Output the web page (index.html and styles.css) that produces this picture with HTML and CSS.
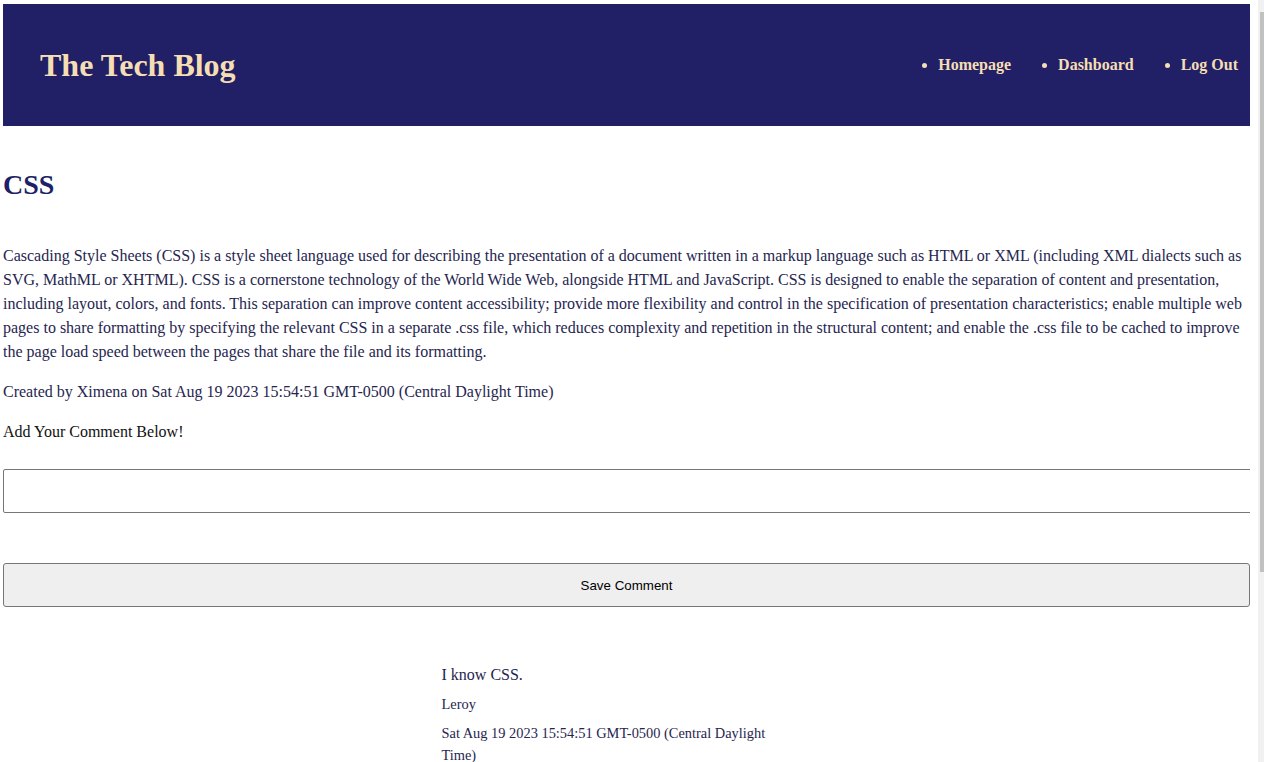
FILE: index.html
```html
<!DOCTYPE html>
<html lang="en">
<head>
<meta charset="utf-8">
<title>The Tech Blog</title>
<link rel="stylesheet" href="styles.css">
</head>
<body>
<header class="site-header">
  <h1 class="site-title">The Tech Blog</h1>
  <nav>
    <ul class="nav-list">
      <li class="nav-item">Homepage</li>
      <li class="nav-item">Dashboard</li>
      <li class="nav-item">Log Out</li>
    </ul>
  </nav>
</header>
<main>
  <h2 class="post-title">CSS</h2>
  <p class="post-body">Cascading Style Sheets (CSS) is a style sheet language used for describing the presentation of a document written in a markup language such as HTML or XML (including XML dialects such as SVG, MathML or XHTML). CSS is a cornerstone technology of the World Wide Web, alongside HTML and JavaScript. CSS is designed to enable the separation of content and presentation, including layout, colors, and fonts. This separation can improve content accessibility; provide more flexibility and control in the specification of presentation characteristics; enable multiple web pages to share formatting by specifying the relevant CSS in a separate .css file, which reduces complexity and repetition in the structural content; and enable the .css file to be cached to improve the page load speed between the pages that share the file and its formatting.</p>
  <p class="post-meta">Created by Ximena on Sat Aug 19 2023 15:54:51 GMT-0500 (Central Daylight Time)</p>
  <form class="comment-form">
    <p class="comment-label">Add Your Comment Below!</p>
    <input class="comment-input" type="text">
    <button class="comment-button" type="button">Save Comment</button>
  </form>
  <section class="comments">
    <div class="comment">
      <p class="comment-text">I know CSS.</p>
      <p class="comment-author">Leroy</p>
      <p class="comment-date">Sat Aug 19 2023 15:54:51 GMT-0500 (Central Daylight Time)</p>
    </div>
  </section>
</main>
<div class="scroll-track"><div class="scroll-thumb"></div></div>
</body>
</html>
```
FILE: styles.css
```css
::-webkit-scrollbar {
  width: 0;
}

body {
  margin: 4px 14px 0 3px;
  font-family: "Liberation Serif", "Times New Roman", serif;
  color: #26254f;
  background: #fff;
}

.scroll-track {
  position: fixed;
  top: 0;
  right: 0;
  width: 6px;
  height: 100vh;
  background: #f1f1f1;
}

.scroll-thumb {
  margin: 12px 0 0 2px;
  width: 4px;
  height: 560px;
  background: #c1c1c1;
}

.site-header {
  display: flex;
  justify-content: space-between;
  align-items: center;
  height: 122px;
  padding: 0 12px 0 37px;
  background: #211f66;
}

.site-title {
  margin: 0;
  font-size: 32px;
  line-height: 36px;
  font-weight: bold;
  color: #f5deb3;
}

.nav-list {
  display: flex;
  gap: 31px;
  margin: 0;
  padding: 0;
  list-style: none;
}

.nav-item {
  display: flex;
  align-items: center;
  font-size: 16px;
  font-weight: bold;
  line-height: 20px;
  color: #f5deb3;
}

.nav-item::before {
  content: "";
  width: 5px;
  height: 5px;
  border-radius: 50%;
  background: #f5deb3;
  margin-right: 11px;
}

.post-title {
  margin: 43px 0 43px;
  font-size: 28px;
  line-height: 32px;
  color: #211f66;
}

.post-body,
.post-meta,
.comment-label {
  margin: 0 0 16px;
  font-size: 16px;
  line-height: 24px;
}

.comment-form {
  margin: 0;
}

.comment-label {
  color: #111;
  margin-bottom: 25px;
}

.comment-input {
  display: block;
  width: 100%;
  height: 36px;
  padding: 3px;
  margin: 0;
  border: 1px solid #767676;
  border-radius: 2px;
  box-sizing: content-box;
  font-family: "Liberation Sans", Arial, sans-serif;
  background: #fff;
}

.comment-button {
  display: block;
  width: 100%;
  height: 44px;
  margin: 50px 0 0;
  border: 1px solid #767676;
  border-radius: 3px;
  background: #efefef;
  color: #000;
  font-family: "Liberation Sans", Arial, sans-serif;
  font-size: 13.33px;
}

.comments {
  display: flex;
  justify-content: center;
  margin-top: 56px;
  padding-bottom: 40px;
}

.comment {
  width: 340px;
  padding-right: 30px;
  color: #26254f;
}

.comment-text {
  margin: 0;
  font-size: 16px;
  line-height: 24px;
}

.comment-author,
.comment-date {
  margin: 6px 0 0;
  font-size: 14.4px;
  line-height: 22px;
}

.comment-date {
  margin-top: 7px;
}
```
